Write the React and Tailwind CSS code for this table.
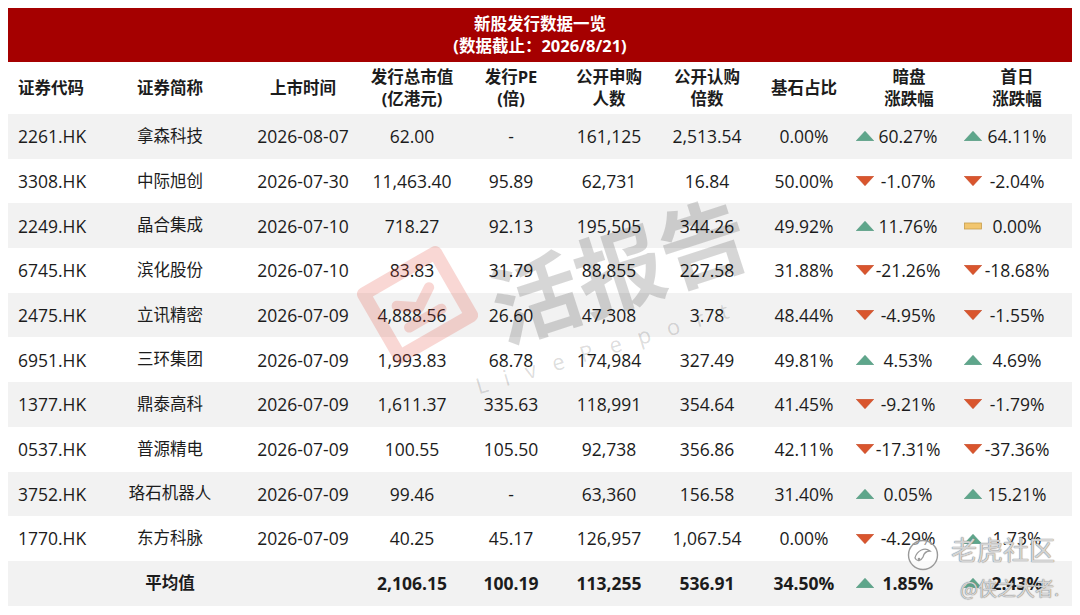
const rows = [
  ['2261.HK', '拿森科技', '2026-08-07', '62.00', '-', '161,125', '2,513.54', '0.00%', ['up', '60.27%'], ['up', '64.11%']],
  ['3308.HK', '中际旭创', '2026-07-30', '11,463.40', '95.89', '62,731', '16.84', '50.00%', ['down', '-1.07%'], ['down', '-2.04%']],
  ['2249.HK', '晶合集成', '2026-07-10', '718.27', '92.13', '195,505', '344.26', '49.92%', ['up', '11.76%'], ['flat', '0.00%']],
  ['6745.HK', '滨化股份', '2026-07-10', '83.83', '31.79', '88,855', '227.58', '31.88%', ['down', '-21.26%'], ['down', '-18.68%']],
  ['2475.HK', '立讯精密', '2026-07-09', '4,888.56', '26.60', '47,308', '3.78', '48.44%', ['down', '-4.95%'], ['down', '-1.55%']],
  ['6951.HK', '三环集团', '2026-07-09', '1,993.83', '68.78', '174,984', '327.49', '49.81%', ['up', '4.53%'], ['up', '4.69%']],
  ['1377.HK', '鼎泰高科', '2026-07-09', '1,611.37', '335.63', '118,991', '354.64', '41.45%', ['down', '-9.21%'], ['down', '-1.79%']],
  ['0537.HK', '普源精电', '2026-07-09', '100.55', '105.50', '92,738', '356.86', '42.11%', ['down', '-17.31%'], ['down', '-37.36%']],
  ['3752.HK', '珞石机器人', '2026-07-09', '99.46', '-', '63,360', '156.58', '31.40%', ['up', '0.05%'], ['up', '15.21%']],
  ['1770.HK', '东方科脉', '2026-07-09', '40.25', '45.17', '126,957', '1,067.54', '0.00%', ['down', '-4.29%'], ['up', '1.73%']],
]

const avg = ['', '平均值', '', '2,106.15', '100.19', '113,255', '536.91', '34.50%', ['up', '1.85%'], ['up', '2.43%']]

const grid = 'grid grid-cols-[104px_124px_122px_104px_98px_98px_98px_100px_106px_110px]'

function Mark({ kind }) {
  if (kind === 'up')
    return (
      <svg width="18" height="10" viewBox="0 0 18 10" className="shrink-0">
        <path d="M9 0.3 L17.7 9.7 L0.3 9.7 Z" fill="#5ea68b" stroke="#4e937a" strokeWidth="0.6" />
      </svg>
    )
  if (kind === 'down')
    return (
      <svg width="18" height="10" viewBox="0 0 18 10" className="shrink-0">
        <path d="M0.3 0.3 L17.7 0.3 L9 9.7 Z" fill="#d9552d" stroke="#c24722" strokeWidth="0.6" />
      </svg>
    )
  return (
    <svg width="18" height="10" viewBox="0 0 18 10" className="shrink-0">
      <rect x="0.5" y="2" width="17" height="6" fill="#f2c66f" stroke="#c79f4c" strokeWidth="0.8" />
    </svg>
  )
}

function Row({ r, shaded, bold }) {
  return (
    <div className={`${grid} h-[44.7px] items-center ${shaded ? 'bg-[#f2f2f2]' : 'bg-white'} ${bold ? 'font-bold' : ''}`}>
      <div className="pl-[10px]">{r[0]}</div>
      <div className="text-center pr-[8px] text-[16.5px]">{r[1]}</div>
      <div className="text-center pl-[12px]">{r[2]}</div>
      <div className="text-center pl-[4px]">{r[3]}</div>
      <div className="text-center">{r[4]}</div>
      <div className="text-center">{r[5]}</div>
      <div className="text-center">{r[6]}</div>
      <div className="text-center pr-[4px]">{r[7]}</div>
      <div className="flex items-center pr-[20px]">
        <Mark kind={r[8][0]} />
        <span className="flex-1 text-center">{r[8][1]}</span>
      </div>
      <div className="flex items-center pl-[2px] pr-[20px]">
        <Mark kind={r[9][0]} />
        <span className="flex-1 text-center">{r[9][1]}</span>
      </div>
    </div>
  )
}

export default function App() {
  return (
    <div className="relative w-[1080px] h-[615px] overflow-hidden bg-white px-[8px] pt-[8px] text-[17.5px] text-[#1c1c1c] font-['Open_Sans','Noto_Sans_CJK_SC',sans-serif]">
      <div className="h-[54px] bg-[#a50000] text-white font-bold text-[16.5px] leading-[22px] flex flex-col items-center justify-center">
        <div>新股发行数据一览</div>
        <div>(数据截止：2026/8/21)</div>
      </div>

      <div className={`${grid} h-[52px] items-center font-bold text-[16.5px] leading-[22px]`}>
        <div className="pl-[10px]">证券代码</div>
        <div className="text-center pr-[8px]">证券简称</div>
        <div className="text-center pl-[12px]">上市时间</div>
        <div className="text-center pl-[4px]">发行总市值<br />(亿港元)</div>
        <div className="text-center">发行PE<br />(倍)</div>
        <div className="text-center">公开申购<br />人数</div>
        <div className="text-center">公开认购<br />倍数</div>
        <div className="text-center pr-[4px]">基石占比</div>
        <div className="text-center">暗盘<br />涨跌幅</div>
        <div className="text-center">首日<br />涨跌幅</div>
      </div>

      {rows.map((r, i) => (
        <Row key={r[0]} r={r} shaded={i % 2 === 0} />
      ))}
      <Row r={avg} shaded bold />

      {/* watermark: 活报告 */}
      <div className="pointer-events-none absolute left-[350px] top-[180px] w-[420px] h-[260px]">
        <svg width="124" height="124" viewBox="0 0 120 120" className="absolute left-[4px] top-[60px] opacity-[0.2]">
          <g transform="rotate(-30 60 60)" fill="none" stroke="#e23c2c" strokeWidth="13" strokeLinejoin="round" strokeLinecap="round">
            <path d="M20 28 L100 28 L100 98 L20 98 Z" />
            <path d="M42 54 L60 66 L78 54" strokeWidth="10" />
            <path d="M42 78 L78 78" strokeWidth="10" />
          </g>
        </svg>
        <div className="absolute left-[268px] top-[86px] -translate-x-1/2 -translate-y-1/2 -rotate-[18deg] whitespace-nowrap text-[88px] leading-none font-bold text-black/[0.16] font-['Noto_Sans_CJK_SC',sans-serif]">
          活报告
        </div>
        <div className="absolute left-[260px] top-[165px] -translate-x-1/2 -translate-y-1/2 -rotate-[17deg] whitespace-nowrap text-[22px] leading-none text-black/[0.15] tracking-[17px] font-['Open_Sans',sans-serif]">
          LiveReport
        </div>
      </div>

      {/* watermark: 老虎社区 */}
      <div className="pointer-events-none absolute left-[906px] top-[538px]">
        <svg width="34" height="34" viewBox="0 0 34 34">
          <circle cx="17" cy="17" r="14.5" fill="rgba(255,255,255,0.5)" stroke="#9a9a9a" strokeWidth="1.4" />
          <path d="M9 20 C11 12 19 9 24 13 C21 13 18 15 17 19 C15 23 11 24 9 20 Z" fill="none" stroke="#9a9a9a" strokeWidth="1.3" />
          <circle cx="13" cy="21" r="1.3" fill="#9a9a9a" />
        </svg>
      </div>
      <div className="pointer-events-none absolute left-[951px] top-[534px] text-[26px] leading-[30px] text-white/70 [text-shadow:0_0_1px_#777,0_0_1px_#777] font-['Noto_Sans_CJK_SC',sans-serif]">
        老虎社区
      </div>
      <div className="pointer-events-none absolute left-[960px] top-[576px] text-[19px] leading-[24px] text-white/70 [text-shadow:0_0_1px_#777,0_0_1px_#777] font-['Noto_Sans_CJK_SC',sans-serif]">
        @侠之大者.
      </div>
    </div>
  )
}
